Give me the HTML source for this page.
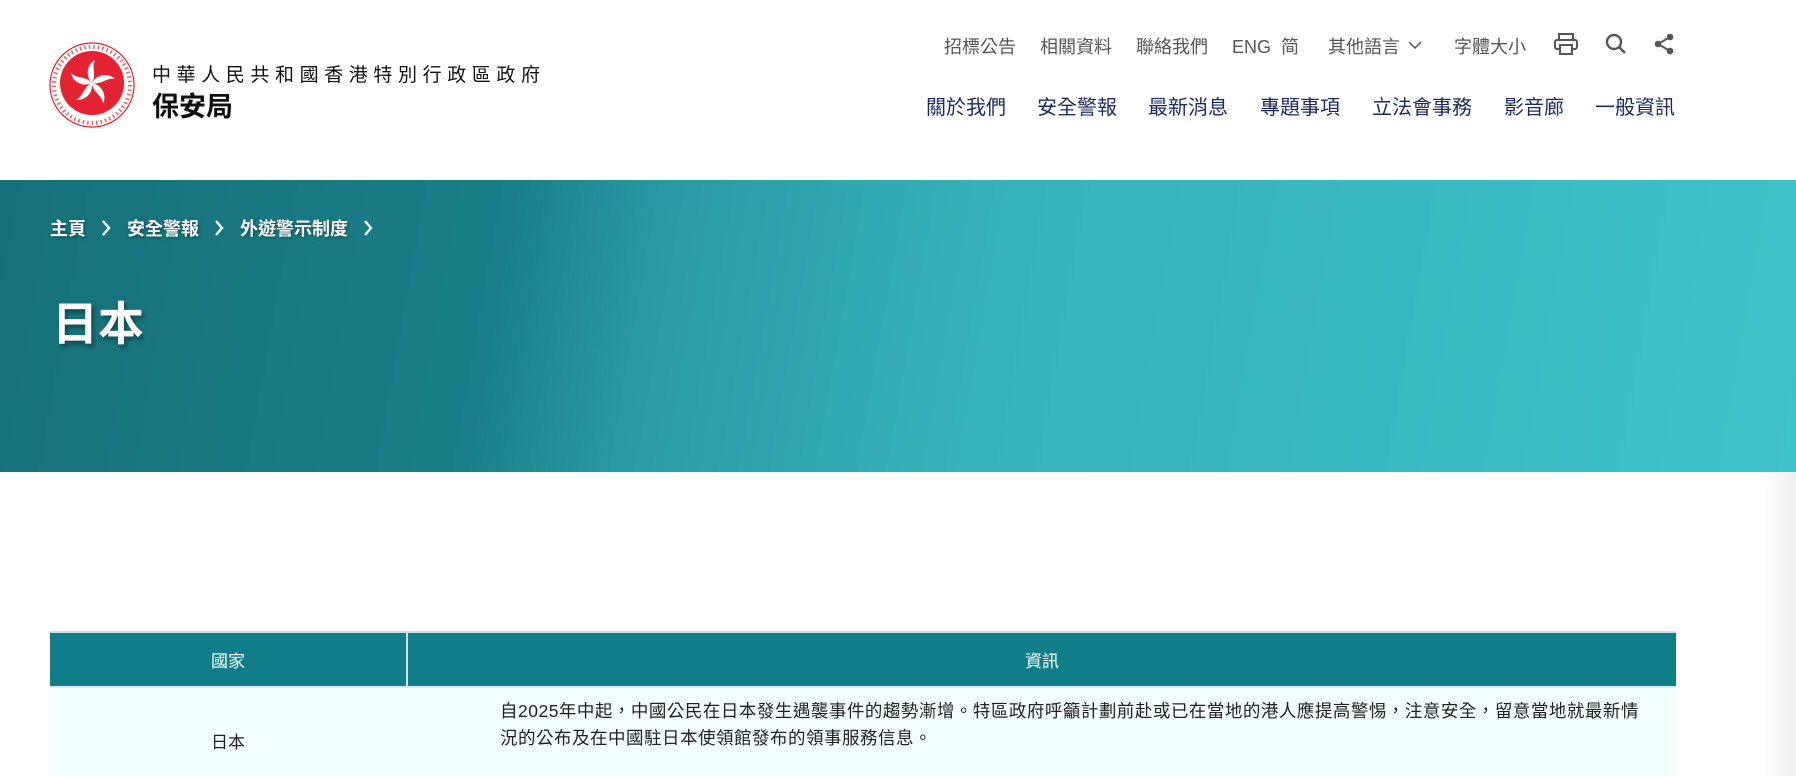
<!DOCTYPE html>
<html><head><meta charset="utf-8"><style>
*{margin:0;padding:0;box-sizing:border-box}
body{width:1796px;height:776px;overflow:hidden;background:#fff;font-family:"Liberation Sans","Noto Sans CJK TC",sans-serif;position:relative}
.abs{position:absolute;white-space:nowrap}
.top a{color:#555;font-size:18px;margin-right:0}
.nav span{color:#1c2a5c;font-size:20px;position:absolute}
.banner{position:absolute;left:0;top:180px;width:1796px;height:292px;
background:linear-gradient(100deg,#167079 0%,#1a7f88 28%,#2a9aa2 36%,#37b2b8 55%,#3ec3c8 100%)}
.sc{position:absolute;right:0;top:472px;width:32px;height:304px;background:linear-gradient(90deg,#fff,#eee)}
.chev{display:inline-block;width:10px;height:16px;margin:0 16px 0 15px;vertical-align:-1px}
</style></head><body>
<div class="sc"></div>
<svg class="abs" style="left:49px;top:42px" width="86" height="86" viewBox="0 0 86 86">
<circle cx="43" cy="43" r="42" fill="#fff" stroke="#e0202e" stroke-width="1.2"/>
<circle cx="43" cy="43" r="38" fill="none" stroke="#e0202e" stroke-width="4" stroke-dasharray="1.5 3" opacity=".7"/>
<circle cx="43" cy="41" r="32" fill="#e52332"/>
<g fill="#fff">
<path d="M43 41 C36 34 38 22 46 18 C42 26 48 32 43 41Z"/>
<path d="M43 41 C36 34 38 22 46 18 C42 26 48 32 43 41Z" transform="rotate(72 43 41)"/>
<path d="M43 41 C36 34 38 22 46 18 C42 26 48 32 43 41Z" transform="rotate(144 43 41)"/>
<path d="M43 41 C36 34 38 22 46 18 C42 26 48 32 43 41Z" transform="rotate(216 43 41)"/>
<path d="M43 41 C36 34 38 22 46 18 C42 26 48 32 43 41Z" transform="rotate(288 43 41)"/>
</g></svg>
<div class="abs" style="left:152px;top:60px;font-size:19px;letter-spacing:5.6px;color:#111">中華人民共和國香港特別行政區政府</div>
<div class="abs" style="left:152px;top:85px;font-size:27px;font-weight:bold;color:#111">保安局</div>

<div class="top">
<a class="abs" style="left:944px;top:33px">招標公告</a>
<a class="abs" style="left:1040px;top:33px">相關資料</a>
<a class="abs" style="left:1136px;top:33px">聯絡我們</a>
<a class="abs" style="left:1232px;top:33px">ENG&nbsp; 简</a>
<a class="abs" style="left:1328px;top:33px">其他語言</a>
<a class="abs" style="left:1454px;top:33px">字體大小</a>
</div>
<svg class="abs" style="left:1406px;top:36px" width="18" height="18" viewBox="0 0 18 18"><path d="M3 6l6 6 6-6" fill="none" stroke="#555" stroke-width="1.5"/></svg>
<svg class="abs" style="left:1553px;top:32px" width="26" height="24" viewBox="0 0 26 24"><g fill="none" stroke="#555" stroke-width="2"><rect x="6" y="2" width="14" height="6"/><rect x="2" y="8" width="22" height="9" rx="2"/><rect x="7" y="13" width="12" height="9" fill="#fff"/></g></svg>
<svg class="abs" style="left:1605px;top:33px" width="22" height="22" viewBox="0 0 22 22"><circle cx="9" cy="9" r="7" fill="none" stroke="#555" stroke-width="2.4"/><path d="M14 14l6 6" stroke="#555" stroke-width="2.6"/></svg>
<svg class="abs" style="left:1654px;top:33px" width="20" height="22" viewBox="0 0 20 22"><circle cx="16" cy="4" r="3.3" fill="#555"/><circle cx="4" cy="11" r="3.3" fill="#555"/><circle cx="16" cy="18" r="3.3" fill="#555"/><path d="M16 4L4 11l12 7" stroke="#555" stroke-width="2" fill="none"/></svg>

<div class="nav">
<span style="left:926px;top:91px">關於我們</span>
<span style="left:1037px;top:91px">安全警報</span>
<span style="left:1148px;top:91px">最新消息</span>
<span style="left:1260px;top:91px">專題事項</span>
<span style="left:1372px;top:91px">立法會事務</span>
<span style="left:1504px;top:91px">影音廊</span>
<span style="left:1595px;top:91px">一般資訊</span>
</div>

<div class="banner"></div>
<div class="abs" style="left:50px;top:215px;color:#fff;font-size:18px;font-weight:bold;text-shadow:1px 1px 3px rgba(0,0,0,.4)">主頁<svg class="chev" viewBox="0 0 10 16"><path d="M2 1l6 7-6 7" fill="none" stroke="#fff" stroke-width="2.4"/></svg>安全警報<svg class="chev" viewBox="0 0 10 16"><path d="M2 1l6 7-6 7" fill="none" stroke="#fff" stroke-width="2.4"/></svg>外遊警示制度<svg class="chev" viewBox="0 0 10 16"><path d="M2 1l6 7-6 7" fill="none" stroke="#fff" stroke-width="2.4"/></svg></div>
<div class="abs" style="left:52px;top:288px;color:#fff;font-size:46px;font-weight:bold;text-shadow:2px 3px 5px rgba(0,0,0,.4)">日本</div>

<div class="abs" style="left:50px;top:631px;width:1626px;height:55px;background:#107e89;border-top:2px solid #cfe1e6"></div>
<div class="abs" style="left:406px;top:631px;width:2px;height:55px;background:#cfe1e6"></div>
<div class="abs" style="left:50px;top:647px;width:356px;text-align:center;color:#fff;font-size:17px">國家</div>
<div class="abs" style="left:408px;top:647px;width:1268px;text-align:center;color:#fff;font-size:17px">資訊</div>
<div class="abs" style="left:50px;top:686px;width:1626px;height:90px;background:#f2feff;border-top:2px solid #e3eef0"></div>
<div class="abs" style="left:50px;top:728px;width:356px;text-align:center;color:#222;font-size:17px">日本</div>
<div class="abs" style="left:500px;top:698px;color:#222;font-size:17.5px;letter-spacing:0.5px;line-height:27px">自2025年中起，中國公民在日本發生遇襲事件的趨勢漸增。特區政府呼籲計劃前赴或已在當地的港人應提高警惕，注意安全，留意當地就最新情<br>況的公布及在中國駐日本使領館發布的領事服務信息。</div>
</body></html>
